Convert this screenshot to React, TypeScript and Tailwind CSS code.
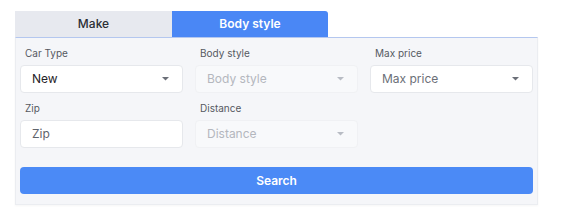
const Caret = ({ light }: { light?: boolean }) => (
  <svg width="7" height="4" viewBox="0 0 7 4" className={light ? "fill-[#b8bcc4]" : "fill-[#6b6f78]"}>
    <path d="M0 0h7L3.5 3.5z" />
  </svg>
);

function Select({ value, placeholder, disabled }: { value?: string; placeholder: string; disabled?: boolean }) {
  return (
    <div
      className={`flex h-[28px] items-center justify-between rounded-[4px] border pl-[11px] pr-[13px] text-[12px] ${
        disabled ? "border-[#f0f1f4] bg-[#f8f9fb] text-[#b4b7be]" : "border-[#e6e8ec] bg-white"
      }`}
    >
      <span className={value ? "text-[#1f2227]" : disabled ? "" : "text-[#6b6f77]"}>{value ?? placeholder}</span>
      <Caret light={disabled} />
    </div>
  );
}

function Field({ label, children }: { label: string; children: React.ReactNode }) {
  return (
    <div>
      <label className="mb-[5px] block pl-[5px] text-[10px] leading-[14px] text-[#555961]">{label}</label>
      {children}
    </div>
  );
}

export default function App() {
  return (
    <div className="min-h-[220px] bg-white pl-[15px] pt-[11px]" style={{ fontFamily: "Inter, 'Noto Sans', sans-serif" }}>
      <div className="w-[523px]">
        <div className="flex w-[313px]">
          <button className="h-[26px] w-[157px] bg-[#e7e9ef] text-[12px] font-medium text-[#2b2e34]">Make</button>
          <button className="h-[26px] w-[156px] rounded-tr-[3px] bg-[#4a87f5] text-[12px] font-semibold text-white">Body style</button>
        </div>
        <div className="border border-t-[#b4c7ef] border-x-[#ebedf1] border-b-[#ebedf1] bg-[#f5f6f9] px-[4px] pb-[10px] pt-[8px] shadow-[0_1px_2px_rgba(0,0,0,0.04)]">
          <div className="grid grid-cols-3 gap-x-[12px] gap-y-[8px]">
            <Field label="Car Type">
              <Select value="New" placeholder="Car Type" />
            </Field>
            <Field label="Body style">
              <Select placeholder="Body style" disabled />
            </Field>
            <Field label="Max price">
              <Select placeholder="Max price" />
            </Field>
            <Field label="Zip">
              <div className="flex h-[28px] items-center rounded-[4px] border border-[#e6e8ec] bg-white pl-[11px] text-[12px] text-[#5f636b]">Zip</div>
            </Field>
            <Field label="Distance">
              <Select placeholder="Distance" disabled />
            </Field>
          </div>
          <button className="mt-[19px] h-[27px] w-full rounded-[4px] bg-[#4b8af6] text-[12px] font-semibold text-white">Search</button>
        </div>
      </div>
    </div>
  );
}
